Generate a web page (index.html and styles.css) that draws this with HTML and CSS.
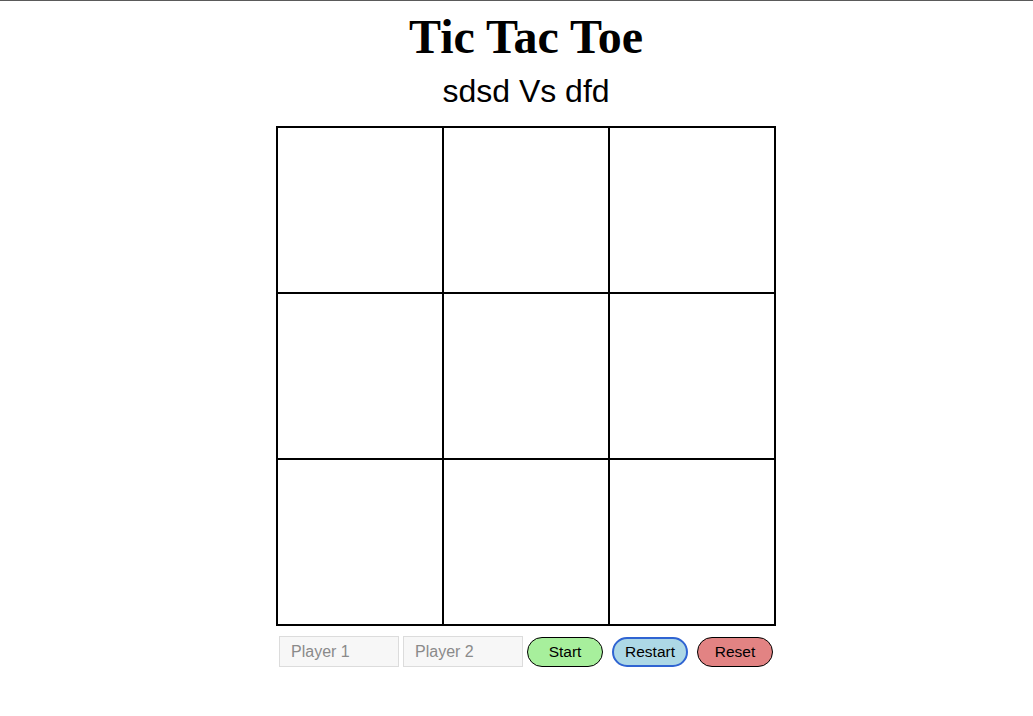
FILE: index.html
```html
<!DOCTYPE html>
<html lang="en">
<head>
    <meta charset="UTF-8">
    <meta name="viewport" content="width=device-width, initial-scale=1.0">
    <title>Tic Tac Toe</title>
    <link rel="stylesheet" href="styles.css">
</head>
<body>
    <div class="container">
        <h1>Tic Tac Toe</h1>
        <h2 id="players">sdsd Vs dfd</h2>
        <div class="board" id="board">
            <div class="cell"></div>
            <div class="cell"></div>
            <div class="cell"></div>
            <div class="cell"></div>
            <div class="cell"></div>
            <div class="cell"></div>
            <div class="cell"></div>
            <div class="cell"></div>
            <div class="cell"></div>
        </div>
        <div class="controls">
            <input type="text" class="player-input" placeholder="Player 1">
            <input type="text" class="player-input" placeholder="Player 2">
            <button class="btn btn-start">Start</button>
            <button class="btn btn-restart">Restart</button>
            <button class="btn btn-reset">Reset</button>
        </div>
    </div>
</body>
</html>
```

FILE: styles.css
```css
body {
    margin: 0;
    padding: 0;
    border-top: 1px solid #5a5a5a;
    background-color: #fff;
    font-family: "Liberation Sans", Arial, sans-serif;
}
.container {
    display: flex;
    flex-direction: column;
    align-items: center;
    padding-left: 19px;
}
h1 {
    font-family: "Liberation Serif", "Times New Roman", serif;
    font-size: 48px;
    font-weight: bold;
    margin: 8px 0 0 0;
    color: #000;
}
h2 {
    font-size: 32px;
    font-weight: normal;
    margin: 9px 0 0 0;
    color: #000;
}
.board {
    display: grid;
    grid-template-columns: repeat(3, 164px);
    grid-template-rows: repeat(3, 164px);
    gap: 2px;
    padding: 2px;
    background-color: #000;
    margin-top: 16px;
}
.cell {
    background-color: #fff;
}
.controls {
    display: flex;
    align-items: center;
    margin-top: 10px;
}
.player-input {
    width: 120px;
    height: 31px;
    box-sizing: border-box;
    padding: 0 11px;
    margin-right: 4px;
    border: 1px solid #dcdcdc;
    background-color: #f7f7f7;
    font-family: "Liberation Sans", Arial, sans-serif;
    font-size: 16px;
}
.player-input::placeholder {
    color: #8a8a8a;
}
.btn {
    width: 76px;
    height: 30px;
    box-sizing: border-box;
    border: 1px solid #000;
    border-radius: 15px;
    font-family: "Liberation Sans", Arial, sans-serif;
    font-size: 15.5px;
    color: #000;
    padding: 0;
}
.btn-start {
    background-color: #a7ef9c;
    margin-left: 0;
}
.btn-restart {
    background-color: #add8e6;
    border: 2px solid #2f64d2;
    margin-left: 9px;
}
.btn-reset {
    background-color: #e28383;
    margin-left: 9px;
}
```
